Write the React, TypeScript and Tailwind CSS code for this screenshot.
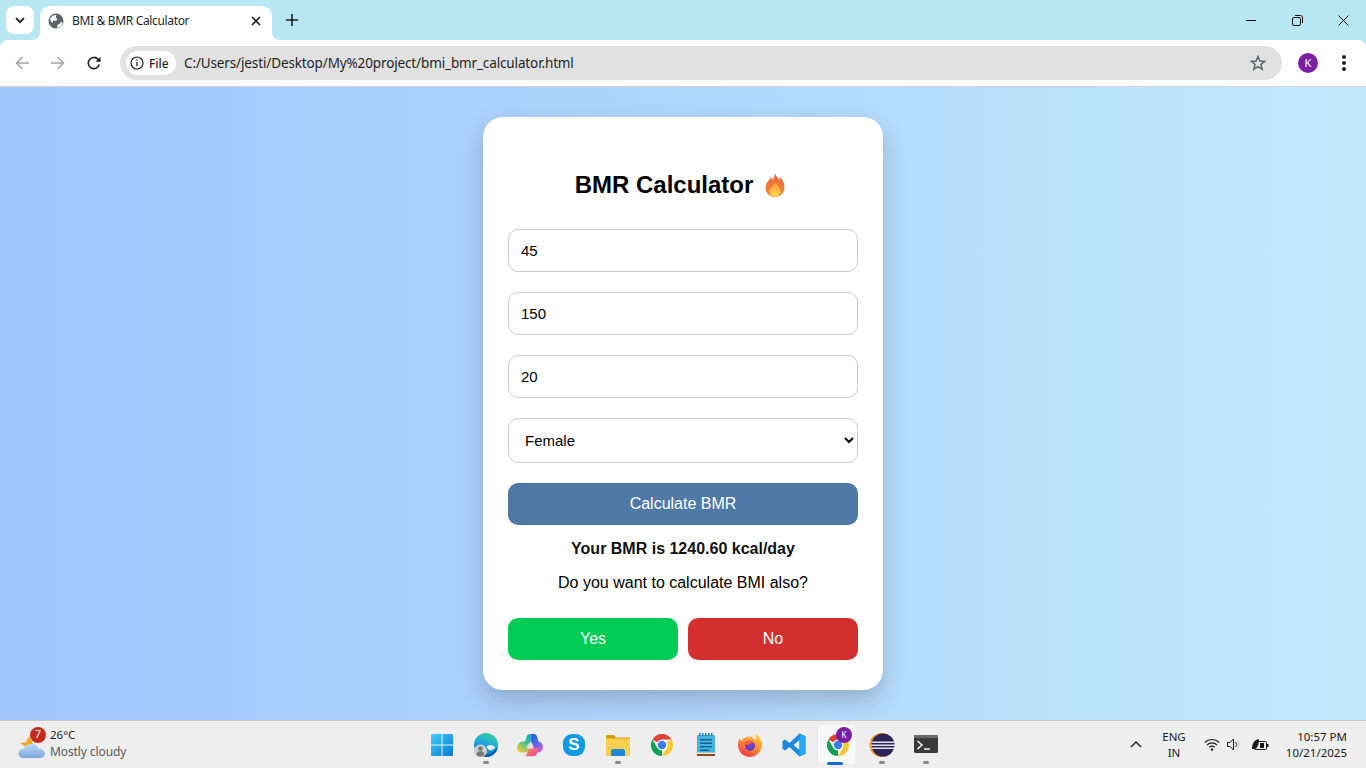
import React from "react"

const ui = "font-['Noto_Sans',sans-serif]"

const Globe = () => (
  <svg width="16" height="16" viewBox="0 0 16 16">
    <circle cx="8" cy="8" r="7.500" fill="#5f6368" />
    <path d="M2 5.500 5 2.500 8.500 2 7.500 4.500 9.500 6 8 8 5 7.500 4.500 10 3 8.500ZM9 15l.5-3 2.500-1.500 1-2 1.500 1.500-1.500 3.500Z" fill="#fff" />
  </svg>
)

const Chrome = () => (
  <svg width="24" height="24" viewBox="0 0 24 24">
    <circle cx="12" cy="12" r="6" fill="#fff" />
    <path d="M2.470 6.500A11 11 0 0 1 21.530 6.500H12A5.500 5.500 0 0 0 7.240 9.250Z" fill="#db4437" />
    <path d="M12 23A11 11 0 0 1 2.470 6.500L7.240 14.750A5.500 5.500 0 0 0 12 17.500Z" fill="#0f9d58" />
    <path d="M21.530 6.500A11 11 0 0 1 12 23L16.760 14.750A5.500 5.500 0 0 0 16.760 9.250Z" fill="#fcc934" />
    <circle cx="12" cy="12" r="4.300" fill="#3f7ee8" />
  </svg>
)

const Start = () => (
  <svg width="24" height="24" viewBox="0 0 24 24">
    <defs>
      <linearGradient id="win" x1="0" y1="0" x2="1" y2="1">
        <stop offset="0" stopColor="#3fd0f8" />
        <stop offset="1" stopColor="#0a78d6" />
      </linearGradient>
    </defs>
    <path d="M1 2a1 1 0 0 1 1-1h9.500v10.500H1ZM12.500 1H22a1 1 0 0 1 1 1v9.500H12.500ZM1 12.500h10.500V23H2a1 1 0 0 1-1-1ZM12.500 12.500H23V22a1 1 0 0 1-1 1h-9.500Z" fill="url(#win)" />
  </svg>
)

const Edge = () => (
  <svg width="26" height="26" viewBox="0 0 26 26">
    <defs>
      <linearGradient id="edge" x1="0.7" y1="0" x2="0.3" y2="1">
        <stop offset="0" stopColor="#3ccf9c" />
        <stop offset="0.5" stopColor="#18a4de" />
        <stop offset="1" stopColor="#0f74c4" />
      </linearGradient>
    </defs>
    <circle cx="13" cy="13" r="12" fill="url(#edge)" />
    <path d="M14 14C17 12 21 13.500 22 15.500 20 18 18 18.500 16.500 18 15 17.500 13.500 16 14 14Z" fill="#eeeeee" />
    <path d="M25 15C23.500 22 18 25 13 25 11 25 9 24 8 22 12 23.500 20 22 25 15Z" fill="#0c58a8" />
    <circle cx="7.500" cy="19" r="6.500" fill="#cfcfcf" />
    <circle cx="7.500" cy="16.500" r="2.300" fill="#777" />
    <path d="M3.500 23c.3-3 2-4 4-4s3.700 1 4 4a6 6 0 0 1-8 0Z" fill="#777" />
  </svg>
)

const Copilot = () => (
  <svg width="26" height="24" viewBox="0 0 26 24">
    <defs>
      <linearGradient id="cpa" x1="0.2" y1="0" x2="0.8" y2="1">
        <stop offset="0" stopColor="#1b62d8" />
        <stop offset="0.5" stopColor="#5a63e6" />
        <stop offset="1" stopColor="#d062d6" />
      </linearGradient>
      <linearGradient id="cpb" x1="0.8" y1="0" x2="0.2" y2="1">
        <stop offset="0" stopColor="#1fa3d8" />
        <stop offset="0.45" stopColor="#44c488" />
        <stop offset="1" stopColor="#f7c93a" />
      </linearGradient>
      <linearGradient id="cpc" x1="0" y1="0" x2="1" y2="0.6">
        <stop offset="0" stopColor="#f5923a" />
        <stop offset="1" stopColor="#ea4f9a" />
      </linearGradient>
    </defs>
    <path d="M13.500 1H17c1.500 0 2.600 1 3 2.400L21.500 8.500c2.800.4 4.500 3 4.500 5.500 0 3-2 5.500-5 5.500H17.500L13 4.500c-.4-1.500-.2-3 .5-3.500Z" fill="url(#cpa)" />
    <path d="M13.500 1C11 1 10 2.200 9.500 4L8 8.500H5.500C2.500 8.500 0 11.500 0 15c0 2.800 2 4.500 4.500 4.500H8c1.500 0 2.500-1 3-2.500L14.500 5.500c.5-2 .2-4.500-1-4.500Z" fill="url(#cpb)" />
    <path d="M11 17c-.7 2.300-1.500 6-3.500 6.300h9c2 0 3-1.300 3.500-2.800l1.500-5.500h-5.500c-2.500 0-4.300.2-5 2Z" fill="url(#cpc)" />
    <path d="M11 10.500h4.500l1.500 5h-5.500c-1.300 0-2 .6-2 .6Z" fill="#f6d9ee" opacity="0.85" />
  </svg>
)

const Skype = () => (
  <div className="w-[22px] h-[22px] rounded-[9px] bg-[#0c9be0] flex items-center justify-center text-white text-[17px] font-bold font-['Liberation_Sans',sans-serif]">
    S
  </div>
)

const Folder = () => (
  <svg width="24" height="22" viewBox="0 0 24 22">
    <path d="M0 2a1 1 0 0 1 1-1h7l2 2.500H24V5H0Z" fill="#d99a0e" />
    <path d="M0 4.500h24V21a1 1 0 0 1-1 1H1a1 1 0 0 1-1-1Z" fill="#fcd04e" />
    <path d="M5 17a2 2 0 0 1 2-2h10a2 2 0 0 1 2 2v5H5Z" fill="#1e88d8" />
  </svg>
)

const Notepad = () => (
  <svg width="20" height="24" viewBox="0 0 20 24">
    <rect x="1" y="2" width="18" height="19" rx="1" fill="#46b4e0" />
    <rect x="1" y="21" width="18" height="2" fill="#8a4a22" />
    <rect x="1" y="19.500" width="18" height="1.500" fill="#f3e7cf" />
    <path d="M3 0h1.500v3H3ZM6 0h1.500v3H6ZM9 0h1.500v3H9ZM12 0h1.500v3H12ZM15 0h1.500v3H15Z" fill="#1a7fb0" />
    <path d="M4 6h12v1.500H4ZM4 9.500h12V11H4ZM4 13h12v1.500H4ZM4 16.500h9V18H4Z" fill="#14668e" />
  </svg>
)

const Firefox = () => (
  <svg width="26" height="26" viewBox="0 0 26 26">
    <defs>
      <linearGradient id="ffa" x1="0.8" y1="0" x2="0.2" y2="1">
        <stop offset="0" stopColor="#ffd23e" />
        <stop offset="0.5" stopColor="#ff8a30" />
        <stop offset="1" stopColor="#f0304e" />
      </linearGradient>
    </defs>
    <path d="M18 1c4 3 7 7 7 12 0 6-5.500 12-12 12S1 20 1 13c0-2.500.5-5 2-7 0 1.500.5 2.500 1.500 3C6 6 9 4.500 11 5c2-1.500 5 .5 8 3.500C19.500 6 19 3.500 18 1Z" fill="url(#ffa)" />
    <circle cx="13" cy="14" r="5" fill="#6d3fc0" />
    <path d="M8 10c3-2 7-1.500 9 1-2-.5-3 0-3.500 1.500L9 13Z" fill="#f25a3a" />
  </svg>
)

const VSCode = () => (
  <svg width="24" height="24" viewBox="0 0 24 24">
    <path d="M17.500 0.500 23.500 3.300V20.700L17.500 23.500 7.500 14 3 17.500 0.500 16V8L3 6.500 7.500 10ZM17.500 7 11.500 12l6 5Z" fill="#1a8ae0" />
    <path d="M17.500 0.500 23.500 3.300V20.700L17.500 23.500Z" fill="#2aa7f0" />
  </svg>
)

const Eclipse = () => (
  <svg width="26" height="26" viewBox="0 0 26 26">
    <circle cx="12.500" cy="13" r="12" fill="#f29a2c" />
    <circle cx="14" cy="13" r="11.500" fill="#2c2456" />
    <path d="M2.500 9.500h23v1.500h-23ZM2 12.500h24V14H2ZM2.500 15.500h23V17h-23Z" fill="#e4e0ee" />
  </svg>
)

const Terminal = () => (
  <svg width="24" height="20" viewBox="0 0 24 20">
    <rect x="0" y="0" width="24" height="18" rx="1.500" fill="#3a3a3a" />
    <rect x="0" y="0" width="24" height="3" fill="#6a6a6a" />
    <path d="M3.500 6 8 10l-4.500 4" fill="none" stroke="#f0f0f0" strokeWidth="1.600" />
    <path d="M10 14h6" stroke="#f0f0f0" strokeWidth="1.500" />
  </svg>
)

const Flame = () => (
  <svg width="22" height="26" viewBox="0 0 22 26">
    <defs>
      <linearGradient id="flame" x1="0.5" y1="0" x2="0.5" y2="1">
        <stop offset="0" stopColor="#e8643c" />
        <stop offset="1" stopColor="#f08a35" />
      </linearGradient>
      <linearGradient id="flamein" x1="0.5" y1="0" x2="0.5" y2="1">
        <stop offset="0" stopColor="#fb9a3a" />
        <stop offset="1" stopColor="#ffd84a" />
      </linearGradient>
    </defs>
    <path d="M11 1c1 3.500 3 4.500 4.500 7 .500-1 .500-2 .500-3 2.500 2.500 4.500 6 4.500 10 0 6-4 10-9.500 10S1.500 21 1.500 15.500C1.500 10.500 6 8 7 5c.5 1 1 2 1 3.500C9.500 6.500 11 4 11 1Z" fill="url(#flame)" />
    <path d="M11.500 10c1 3 5 5 5 9.500 0 3-2.500 5-5.500 5s-5.500-2-5.500-5c0-3.500 4.500-5.500 6-9.500Z" fill="url(#flamein)" />
  </svg>
)

const Weather = () => (
  <svg width="28" height="26" viewBox="0 0 28 26">
    <defs>
      <linearGradient id="cloud" x1="0.5" y1="0" x2="0.5" y2="1">
        <stop offset="0" stopColor="#bcd9f5" />
        <stop offset="1" stopColor="#7ba9de" />
      </linearGradient>
    </defs>
    <path d="M2 10 8 9.500 11 3l4 8-6 4Z" fill="#f5a623" />
    <path d="M6 25c-3.500 0-5.500-2-5.500-4.500 0-2.500 2-4.500 5-4.500C6.500 13 10 11 14 11c3.500 0 6 2 7 5 3.500 0 6 2 6 4.500S25 25 22 25Z" fill="url(#cloud)" />
  </svg>
)

const taskIcons = [
  { icon: <Start /> },
  { icon: <Edge />, dot: true },
  { icon: <Copilot /> },
  { icon: <Skype /> },
  { icon: <Folder />, dot: true },
  { icon: <Chrome /> },
  { icon: <Notepad /> },
  { icon: <Firefox /> },
  { icon: <VSCode /> },
]

const TaskSlot = ({ children, dot }: { children: React.ReactNode; dot?: boolean }) => (
  <div className="relative w-[44px] h-[48px] flex items-center justify-center">
    {children}
    {dot && <div className="absolute bottom-[5px] left-[19px] w-[6px] h-[3px] rounded-full bg-[#8b8b8b]" />}
  </div>
)

const fieldClass =
  "w-full h-[43px] px-3 rounded-[10px] border border-[#ccc] bg-white text-[15px] text-black outline-none"

const App = () => {
  return (
    <div className="h-screen w-full overflow-hidden flex flex-col font-['Liberation_Sans',sans-serif]">
      {/* tab strip */}
      <div className={`h-[40px] shrink-0 bg-[#b6e7f3] flex ${ui}`}>
        <div className="w-[40px] pt-[6px] pl-[6px]">
          <div className="w-[28px] h-[28px] rounded-[8px] bg-white flex items-center justify-center">
            <svg width="10" height="7" viewBox="0 0 10 7">
              <path d="M1 1.200 5 5.200 9 1.200" fill="none" stroke="#1f1f1f" strokeWidth="1.800" />
            </svg>
          </div>
        </div>
        <div className="relative mt-[6px] w-[232px] h-[34px] bg-white rounded-t-[10px] flex items-center pl-[8px] pr-[11px] pb-[5px]">
          <svg className="absolute -left-[8px] bottom-0" width="8" height="8" viewBox="0 0 8 8">
            <path d="M8 0V8H0A8 8 0 0 0 8 0Z" fill="#fff" />
          </svg>
          <svg className="absolute -right-[8px] bottom-0" width="8" height="8" viewBox="0 0 8 8">
            <path d="M0 0V8H8A8 8 0 0 1 0 0Z" fill="#fff" />
          </svg>
          <Globe />
          <span className="ml-[8px] text-[12px] text-[#1f1f1f] tracking-[-0.34px]">BMI &amp; BMR Calculator</span>
          <svg className="ml-auto" width="10" height="10" viewBox="0 0 10 10">
            <path d="M1 1l8 8M9 1 1 9" stroke="#1f1f1f" strokeWidth="1.600" />
          </svg>
        </div>
        <div className="ml-[14px] w-[12px] flex items-center">
          <svg width="12" height="12" viewBox="0 0 12 12">
            <path d="M6 0v12M0 6h12" stroke="#1f1f1f" strokeWidth="1.600" />
          </svg>
        </div>
        <div className="ml-auto flex items-center">
          <div className="w-[46px] flex justify-center">
            <div className="w-[10px] h-[1px] bg-[#111]" />
          </div>
          <div className="w-[46px] flex justify-center">
            <svg width="11" height="11" viewBox="0 0 11 11">
              <rect x="0.500" y="2.500" width="8" height="8" rx="1.500" fill="none" stroke="#111" />
              <path d="M3 .5h5.500a2 2 0 0 1 2 2V8" fill="none" stroke="#111" />
            </svg>
          </div>
          <div className="w-[46px] flex justify-center">
            <svg width="11" height="11" viewBox="0 0 11 11">
              <path d="M.5.5l10 10M10.500.5l-10 10" stroke="#111" />
            </svg>
          </div>
        </div>
      </div>

      {/* toolbar */}
      <div className={`h-[47px] shrink-0 bg-[#b6e7f3] ${ui}`}>
        <div className="h-full bg-white rounded-tr-[8px] rounded-tl-[8px] border-b border-[#d3d3d3] flex items-center">
          <div className="w-[44px] flex justify-center">
            <svg width="14" height="14" viewBox="0 0 14 14">
              <path d="M7.500 1 1.500 7l6 6M1.500 7H14" fill="none" stroke="#a3a3a3" strokeWidth="1.500" />
            </svg>
          </div>
          <div className="w-[28px] flex justify-center">
            <svg width="14" height="14" viewBox="0 0 14 14">
              <path d="M6.500 1l6 6-6 6M12.500 7H0" fill="none" stroke="#a3a3a3" strokeWidth="1.500" />
            </svg>
          </div>
          <div className="ml-[4px] w-[36px] flex justify-center">
            <svg width="14" height="14" viewBox="0 0 14 14">
              <path d="M12.300 8.500A5.600 5.600 0 1 1 11 3.200L13 5" fill="none" stroke="#1f1f1f" strokeWidth="1.600" />
              <path d="M13.500 .8v5h-5Z" fill="#1f1f1f" />
            </svg>
          </div>
          <div className="ml-[8px] w-[1162px] h-[34px] rounded-full bg-[#e1e1e1] flex items-center pl-[6px] pr-[16px]">
            <div className="w-[50px] h-[24px] rounded-full bg-white flex items-center pl-[4px]">
              <svg width="14" height="14" viewBox="0 0 14 14">
                <circle cx="7" cy="7" r="6" fill="none" stroke="#1f1f1f" strokeWidth="1.200" />
                <path d="M7 6v4.200M7 3.600v1.200" stroke="#1f1f1f" strokeWidth="1.300" />
              </svg>
              <span className="ml-[5px] pt-[1px] text-[12px] font-medium text-[#1f1f1f]">File</span>
            </div>
            <span className="ml-[8px] pt-[1px] text-[13.500px] tracking-[-0.13px] text-[#1f1f1f]">
              C:/Users/jesti/Desktop/My%20project/bmi_bmr_calculator.html
            </span>
            <svg className="ml-auto" width="16" height="16" viewBox="0 0 16 16">
              <path d="M8 1.500 9.900 6l4.800.4-3.700 3.100 1.200 4.800L8 11.700l-4.200 2.600L5 9.500 1.300 6.400 6.100 6Z" fill="none" stroke="#5f6368" strokeWidth="1.500" />
            </svg>
          </div>
          <div className="ml-[16px] w-[20px] h-[20px] rounded-full bg-[#7b1fa2] text-white text-[11px] flex items-center justify-center">
            K
          </div>
          <div className="ml-[24px] flex flex-col gap-[2.500px]">
            <div className="w-[3.500px] h-[3.500px] rounded-full bg-[#222]" />
            <div className="w-[3.500px] h-[3.500px] rounded-full bg-[#222]" />
            <div className="w-[3.500px] h-[3.500px] rounded-full bg-[#222]" />
          </div>
        </div>
      </div>

      {/* page */}
      <div className="flex-1 min-h-0 bg-gradient-to-r from-[#a1c4fd] to-[#c2e9fb] flex justify-center items-start pt-[30px]">
        <div className="w-[400px] h-[573px] bg-white rounded-[20px] shadow-[0_10px_25px_rgba(0,0,0,0.2)] px-[25px] pt-[54px] flex flex-col text-black">
          <div className="h-[28px] flex items-center justify-center gap-[11px] pr-[5px] text-[24px] font-bold">
            <span>BMR Calculator</span>
            <Flame />
          </div>
          <input className={`${fieldClass} mt-[30px]`} defaultValue="45" readOnly />
          <input className={`${fieldClass} mt-[20px]`} defaultValue="150" readOnly />
          <input className={`${fieldClass} mt-[20px]`} defaultValue="20" readOnly />
          <select className="w-full h-[45px] mt-[20px] px-3 rounded-[10px] border border-[#ccc] bg-white text-[15px] text-black outline-none" defaultValue="Female">
            <option>Female</option>
            <option>Male</option>
          </select>
          <button className="w-full h-[42px] mt-[20px] rounded-[10px] bg-[#4f79a4] text-white text-base">Calculate BMR</button>
          <p className="mt-[15px] h-[18px] leading-[18px] text-center font-bold text-base text-[#111]">Your BMR is 1240.60 kcal/day</p>
          <p className="mt-[16px] h-[18px] leading-[18px] text-center text-base">Do you want to calculate BMI also?</p>
          <div className="mt-[26px] flex gap-[10px]">
            <button className="flex-1 h-[42px] rounded-[10px] bg-[#00cc55] text-white text-base">Yes</button>
            <button className="flex-1 h-[42px] rounded-[10px] bg-[#d32f2f] text-white text-base">No</button>
          </div>
        </div>
      </div>

      {/* taskbar */}
      <div className={`h-[48px] shrink-0 bg-[#eeeeee] border-t border-[#c9c9c9] flex ${ui}`}>
        <div className="w-[420px] flex items-center pl-[18px]">
          <div className="relative w-[28px] h-[26px] mt-[2px]">
            <Weather />
            <div className="absolute -top-[6px] left-[12px] w-[16px] h-[16px] rounded-full bg-[#c42b1c] text-white text-[11px] flex items-center justify-center">
              7
            </div>
          </div>
          <div className="ml-[4px] pb-[3px] flex flex-col text-[12px] leading-[17px]">
            <span className="text-[#1a1a1a] text-[11.500px]">26°C</span>
            <span className="text-[#5c5c5c] tracking-[-0.1px]">Mostly cloudy</span>
          </div>
        </div>
        <div className="flex">
          {taskIcons.map((t, i) => (
            <TaskSlot key={i} dot={t.dot}>
              {t.icon}
            </TaskSlot>
          ))}
          <div className="relative w-[44px] h-[48px] flex items-center justify-center">
            <div className="absolute left-[2px] top-[4px] w-[36px] h-[39px] rounded-[4px] bg-[#f8f8f8] shadow-[2px_0_0_#f4f4f4,0_0_1px_#ccc]" />
            <div className="relative">
              <Chrome />
            </div>
            <div className="absolute top-[6px] left-[20px] w-[16px] h-[16px] rounded-full bg-[#7b1fa2] text-white text-[8px] flex items-center justify-center">
              K
            </div>
            <div className="absolute bottom-[4px] left-[11px] w-[16px] h-[3px] rounded-full bg-[#0a6cd0]" />
          </div>
          <TaskSlot dot>
            <Eclipse />
          </TaskSlot>
          <TaskSlot dot>
            <Terminal />
          </TaskSlot>
        </div>
        <div className="flex-1 flex items-center pl-[182px]">
          <svg width="12" height="7" viewBox="0 0 12 7">
            <path d="M1 6 6 1l5 5" fill="none" stroke="#1a1a1a" strokeWidth="1.400" />
          </svg>
          <div className="ml-[13px] w-[38px] text-center text-[11.500px] leading-[16px] text-[#1a1a1a]">
            ENG
            <br />
            IN
          </div>
          <svg className="ml-[11px]" width="16" height="13" viewBox="0 0 16 13">
            <path d="M.7 4.500a10.500 10.500 0 0 1 14.600 0M3 7a7 7 0 0 1 10 0M5.300 9.300a3.600 3.600 0 0 1 5.400 0" fill="none" stroke="#1a1a1a" strokeWidth="1.100" />
            <circle cx="8" cy="11.500" r="1.200" fill="#1a1a1a" />
          </svg>
          <svg className="ml-[7px]" width="14" height="13" viewBox="0 0 14 13">
            <path d="M.5 4.500h2.500L6.500 1v11L3 8.500H.5Z" fill="none" stroke="#1a1a1a" />
            <path d="M8.500 4a3.500 3.500 0 0 1 0 5" fill="none" stroke="#1a1a1a" />
            <path d="M10.500 2.500a6 6 0 0 1 0 8" fill="none" stroke="#c4c4c4" />
          </svg>
          <svg className="ml-[10px]" width="18" height="13" viewBox="0 0 18 13">
            <rect x="3.500" y="3.500" width="12" height="8" rx="1" fill="none" stroke="#1a1a1a" />
            <path d="M16 6h1.500v3H16Z" fill="#1a1a1a" />
            <path d="M1 11C1 6 3 2 8 1c0 4-1 9-4 10Z" fill="#1a1a1a" />
            <path d="M9 5h4v5H9Z" fill="#1a1a1a" />
          </svg>
          <div className="ml-auto pr-[19px] text-right text-[11.500px] leading-[16px] text-[#1a1a1a]">
            10:57 PM
            <br />
            10/21/2025
          </div>
        </div>
      </div>
    </div>
  )
}

export default App
